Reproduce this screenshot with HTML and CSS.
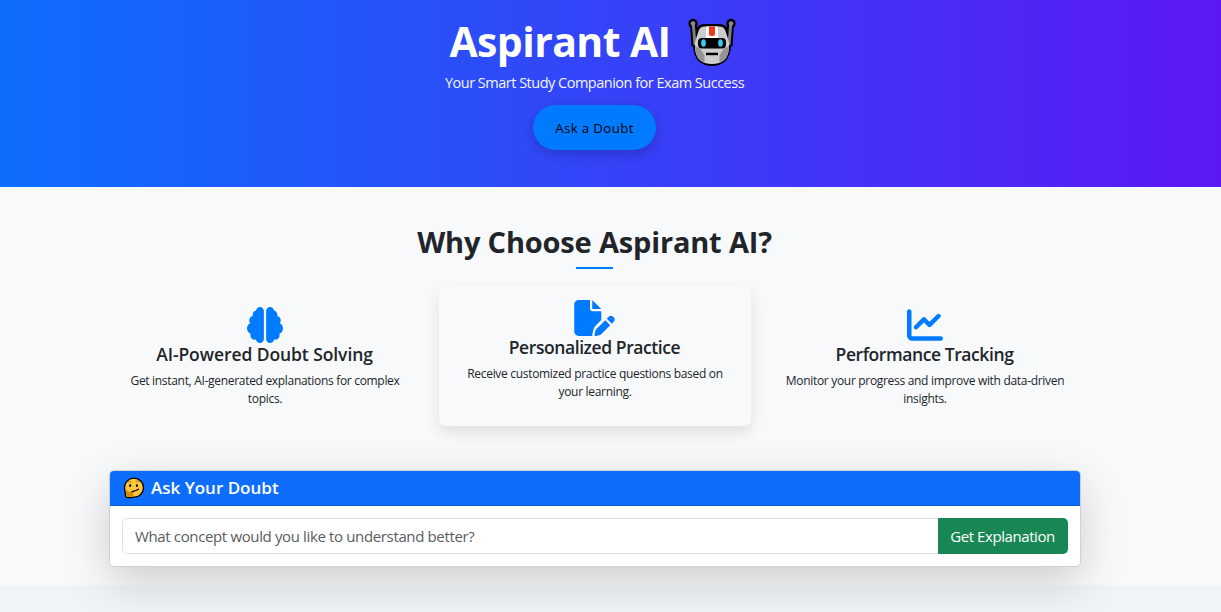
FILE: index.html
```html
<!DOCTYPE html>
<html lang="en">
<head>
<meta charset="utf-8">
<title>Aspirant AI</title>
<link rel="stylesheet" href="styles.css">
</head>
<body>
<header class="hero">
  <h1 class="hero-title"><span class="hero-name">Aspirant AI</span>
    <svg class="robot" viewBox="0 0 48 48" aria-hidden="true">
      <circle cx="5" cy="5.500" r="4.700"/><circle cx="43" cy="5.500" r="4.700"/>
      <path d="M5.500 6 7 28M42.500 6 41 28" stroke="#000" stroke-width="7"/>
      <path d="M16 8q-5 0-7 6l-2 10v5q2 17 17 17t17-17v-5l-2-10q-2-6-7-6z" stroke="#000" stroke-width="4"/>
      <path d="M5.300 6 7 27M42.700 6 41 27" stroke="#808080" stroke-width="3"/>
      <circle cx="5" cy="5.500" r="2.300" fill="#8b8b8b"/><circle cx="43" cy="5.500" r="2.300" fill="#8b8b8b"/>
      <path d="M16 8.500q-4.500 0-6 6L7 24v6q1 16 17 16t17-16v-6l-3-9.500q-1.500-6-6-6z" fill="#cdcdcd"/>
      <path d="M7 28l5.500 3 4 6v7.500Q7 41 7 28zM41 28l-5.500 3-4 6v7.500Q41 41 41 28z" fill="#949494"/>
      <path d="M18 8.500h12V20H18z" fill="#fff"/>
      <path d="M21 8.500h6V16q0 2-3 2t-3-2z" fill="#f03a17"/>
      <rect x="10" y="20" width="28" height="10.500" rx="4"/>
      <ellipse cx="15.500" cy="25" rx="2.400" ry="3.800" fill="#35c9f2"/>
      <ellipse cx="32.500" cy="25" rx="2.400" ry="3.800" fill="#35c9f2"/>
      <path d="M18 34.700h12v2.500H18z"/>
    </svg>
  </h1>
  <p class="hero-lead">Your Smart Study Companion for Exam Success</p>
  <a class="hero-button">Ask a Doubt</a>
</header>
<main class="main">
  <h2 class="section-title">Why Choose Aspirant AI?</h2>
  <div class="features">
    <article class="feature">
      <svg class="icon" viewBox="0 0 512 512"><path d="M184 0c30.900 0 56 25.100 56 56V456c0 30.900-25.100 56-56 56c-28.900 0-52.700-21.900-55.700-50.100c-5.200 1.400-10.700 2.100-16.300 2.100c-35.300 0-64-28.700-64-64c0-7.400 1.300-14.600 3.600-21.200C21.400 367.400 0 338.200 0 304c0-31.900 18.700-59.500 45.800-72.300C37.100 220.800 32 207 32 192c0-30.700 21.600-56.300 50.400-62.600C80.800 123.900 80 118 80 112c0-29.900 20.600-55.100 48.300-62.100C131.300 21.900 155.100 0 184 0zM328 0c28.900 0 52.600 21.900 55.700 49.900c27.800 7 48.300 32.100 48.300 62.100c0 6-.8 11.900-2.400 17.400c28.800 6.200 50.400 31.900 50.400 62.600c0 15-5.100 28.800-13.800 39.700C493.300 244.500 512 272.100 512 304c0 34.200-21.400 63.400-51.600 74.800c2.300 6.600 3.600 13.800 3.600 21.200c0 35.300-28.700 64-64 64c-5.600 0-11.100-.7-16.300-2.100c-3 28.200-26.800 50.100-55.700 50.100c-30.900 0-56-25.100-56-56V56c0-30.900 25.100-56 56-56z"/></svg>
      <h3 class="feature-title">AI-Powered Doubt Solving</h3>
      <p class="feature-text">Get instant, AI-generated explanations for complex<br>topics.</p>
    </article>
    <article class="feature feature-raised">
      <svg class="icon icon-wide" viewBox="0 0 576 512"><path d="M0 64C0 28.700 28.700 0 64 0H224V128c0 17.700 14.300 32 32 32H384V285.700l-86.800 86.800c-10.300 10.300-17.500 23.100-21 37.200l-18.700 74.900c-2.300 9.200-1.800 18.800 1.300 27.500H64c-35.300 0-64-28.700-64-64V64zm384 64H256V0L384 128zM549.800 235.700l14.400 14.400c15.600 15.600 15.600 40.900 0 56.600l-29.400 29.400-71-71 29.400-29.400c15.600-15.600 40.900-15.600 56.600 0zM311.900 417L441.100 287.800l71 71L382.900 487.900c-4.100 4.100-9.200 7-14.900 8.400l-60.100 15c-5.500 1.400-11.200-.2-15.200-4.200s-5.600-9.700-4.200-15.200l15-60.100c1.400-5.600 4.300-10.800 8.400-14.900z"/></svg>
      <h3 class="feature-title feature-title-tight">Personalized Practice</h3>
      <p class="feature-text">Receive customized practice questions based on<br>your learning.</p>
    </article>
    <article class="feature">
      <svg class="icon" viewBox="0 0 512 512"><path d="M64 64c0-17.700-14.300-32-32-32S0 46.300 0 64V400c0 44.200 35.800 80 80 80H480c17.700 0 32-14.300 32-32s-14.300-32-32-32H80c-8.800 0-16-7.200-16-16V64zm406.600 86.600c12.500-12.500 12.500-32.800 0-45.300s-32.800-12.500-45.300 0L320 210.700l-57.400-57.400c-12.500-12.500-32.800-12.500-45.300 0l-112 112c-12.500 12.500-12.500 32.800 0 45.300s32.800 12.500 45.300 0L240 221.300l57.400 57.400c12.500 12.500 32.800 12.500 45.300 0l128-128z"/></svg>
      <h3 class="feature-title feature-title-tight">Performance Tracking</h3>
      <p class="feature-text">Monitor your progress and improve with data-driven<br>insights.</p>
    </article>
  </div>
  <section class="ask">
    <h3 class="ask-header">
      <svg class="thinking" viewBox="0 0 22 22" aria-hidden="true">
        <path d="M3.500 20.300Q2 19 2.300 15.500 1.500 13 1.500 10.500a9.500 9.500 0 1 1 9.500 9.700L8.500 20.700z" fill="#fdc63f" stroke="#000" stroke-width="1.300"/>
        <path d="M3 13.500q2-1 2.800 1.500l4.500-.8q1.300.8-.5 2 1.500 3-1.500 3.800H4l-.8-1z" fill="#d88c0b"/>
        <path d="M9 14.600q3.500-.6 6.500-2.300" fill="none" stroke="#000" stroke-width="1.300" stroke-linecap="round"/>
        <path d="M5 5.500Q6.500 4 8.500 5M12.500 4.300q2-1 4 .7" fill="none" stroke="#b97a18" stroke-width="1"/>
        <ellipse cx="7.200" cy="8.500" rx="1" ry="1.500"/><ellipse cx="13.900" cy="8.500" rx="1" ry="1.500"/>
      </svg>
      <span class="ask-title">Ask Your Doubt</span>
    </h3>
    <div class="ask-body">
      <div class="ask-input">What concept would you like to understand better?</div>
      <div class="ask-submit">Get Explanation</div>
    </div>
  </section>
</main>
</body>
</html>
```
FILE: styles.css
```css
* { box-sizing: border-box; }
body {
  margin: 0;
  height: 612px;
  overflow: hidden;
  background: #f0f4f8;
  color: #212529;
  font-family: "Open Sans", "Noto Sans", sans-serif;
}
h1, h2, h3, p { margin: 0; white-space: nowrap; }
.hero {
  height: 187px;
  padding: 18px 32px 0 0;
  display: flex;
  flex-direction: column;
  align-items: center;
  background: linear-gradient(to right, #0d6efd, #5c18f3);
  color: #fff;
}
.hero-title {
  display: flex;
  align-items: center;
  gap: 17px;
  height: 50px;
  padding-right: 4px;
  font-size: 41px;
  font-weight: 700;
  letter-spacing: -0.6px;
}
.hero-name { padding-bottom: 4px; }
.robot { width: 48px; height: 48px; margin-bottom: 3px; fill: #000; }
.hero-lead {
  margin-top: 4px;
  font-size: 14.5px;
  line-height: 22px;
  font-weight: 400;
  letter-spacing: -.5px;
  opacity: .95;
}
.hero-button {
  margin-top: 11px;
  width: 123px;
  height: 45px;
  border-radius: 23px;
  background: #007bff;
  box-shadow: 0 4px 12px rgba(0, 0, 0, .2);
  color: #000;
  font-size: 13.3px;
  line-height: 46px;
  text-align: center;
  letter-spacing: .35px;
}
.main {
  height: 398px;
  padding: 35px 140px 0 110px;
  background: #f8f9fb;
}
.section-title {
  display: flex;
  flex-direction: column;
  align-items: center;
  padding-right: 2px;
  font-size: 29px;
  font-weight: 700;
  line-height: 40px;
  letter-spacing: -.17px;
}
.section-title::after {
  content: "";
  width: 37px;
  height: 2px;
  margin-top: 5px;
  background: #007bff;
}
.features {
  display: grid;
  grid-template-columns: repeat(3, 312px);
  gap: 18px;
  margin: 23px 0 0 -1px;
}
.feature {
  height: 141px;
  padding-top: 15px;
  display: flex;
  flex-direction: column;
  align-items: center;
  border-radius: 7px;
  text-align: center;
}
.feature-raised {
  margin-top: -7px;
  box-shadow: 0 7px 15px rgba(0, 0, 0, .1);
}
.icon { width: 36px; height: 36px; margin-right: .6px; fill: #007bff; flex: none; }
.icon-wide { width: 41px; margin-right: 2px; }
.feature-title { padding-right: 1px; font-size: 17.5px; line-height: 22px; font-weight: 580; letter-spacing: -.08px; }
.feature-title-tight { letter-spacing: -.42px; }
.feature-text { margin-top: 7px; font-size: 12px; line-height: 18px; letter-spacing: -.31px; }
.ask {
  height: 97px;
  width: 972px;
  margin: 37px 0 0 -1px;
  border: 1px solid #cfd0d1;
  border-radius: 5px;
  background: #fff;
  box-shadow: 0 15px 45px rgba(0, 0, 0, .175);
}
.ask-header {
  display: flex;
  align-items: center;
  gap: 7px;
  height: 35px;
  padding-left: 13px;
  border-bottom: 1px solid #0b5dd7;
  border-radius: 4px 4px 0 0;
  background: #0d6efd;
  color: #fff;
  font-size: 17px;
  font-weight: 600;
}
.ask-title { padding-bottom: 2px; }
.thinking { width: 22px; height: 22px; margin-right: -1px; fill: #000; }
.ask-body { display: flex; padding: 12px; font-size: 15px; line-height: 35px; }
.ask-input {
  flex: 1;
  height: 36px;
  padding-left: 12px;
  border: 1px solid #dee2e6;
  border-right: 0;
  border-radius: 5px 0 0 5px;
  color: #595c5f;
  letter-spacing: -.36px;
}
.ask-submit {
  width: 130px;
  height: 36px;
  padding-right: 1px;
  border-radius: 0 5px 5px 0;
  background: #198754;
  color: #fff;
  line-height: 37px;
  text-align: center;
  letter-spacing: -.42px;
}
```
